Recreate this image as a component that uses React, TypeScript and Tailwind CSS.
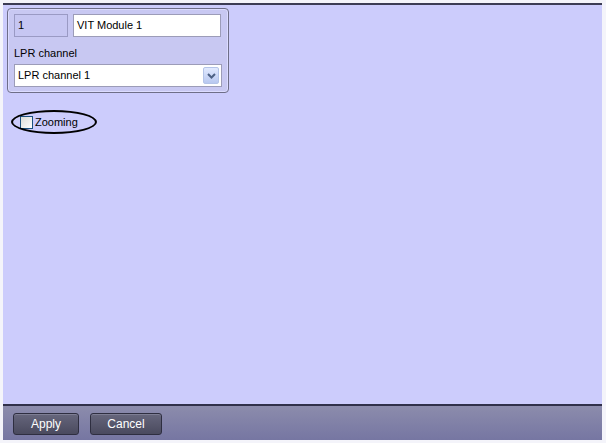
import React from "react";

const font = { fontFamily: '"Liberation Sans", Arial, sans-serif' };

function PanelBox() {
  return (
    <div className="ml-[4px] mt-[3px] w-[222px] h-[85px] rounded-[4px] border border-[#6e6e88] bg-[#c8c8f2] shadow-[inset_0_0_0_1px_#dcdcff] px-[6px] pt-[5px]">
      <div className="flex gap-[5px]">
        <div className="w-[54px] h-[23px] border border-[#9a9ac4] bg-[#c6c6f2] text-[11px] text-black leading-[21px] pl-[3px]">
          1
        </div>
        <div className="w-[148px] h-[23px] border border-[#9c9cb8] bg-white text-[11px] text-black leading-[21px] pl-[3px]">
          VIT Module 1
        </div>
      </div>
      <div className="text-[11px] text-black mt-[10px] leading-[13px]">LPR channel</div>
      <div className="mt-[4px] w-[208px] h-[23px] border border-[#9c9cb8] bg-white flex items-center justify-between pl-[3px] pr-[2px]">
        <span className="text-[11px] text-black">LPR channel 1</span>
        <div className="w-[16px] h-[17px] rounded-[2px] border border-[#b4c4e8] bg-gradient-to-b from-[#e2eaff] to-[#b8c8f0] flex items-center justify-center">
          <svg width="9" height="6" viewBox="0 0 9 6">
            <path d="M1 1 L4.5 4.5 L8 1" stroke="#4d6185" strokeWidth="2" fill="none" />
          </svg>
        </div>
      </div>
    </div>
  );
}

function Btn({ label, w }: { label: string; w: string }) {
  return (
    <button
      className={`${w} h-[22px] rounded-[3px] border border-[#2e2e40] bg-gradient-to-b from-[#66667c] to-[#4a4a5e] text-white text-[12px] leading-[20px] shadow-[inset_0_1px_0_#7e7e94]`}
    >
      {label}
    </button>
  );
}

export default function App() {
  return (
    <div className="w-[606px] h-[443px] bg-[#f4f4fa] overflow-hidden" style={font}>
      <div className="ml-[3px] mt-[3px] w-[599px] h-[437px] flex flex-col">
        <div className="h-[2px] bg-[#3c3c54]" />
        <div className="flex-1 bg-[#ccccfc]">
          <PanelBox />
          <div className="relative ml-[17px] mt-[22px] flex items-center gap-[2px] h-[14px]">
            <div className="absolute left-[-9px] top-[-5px] w-[86px] h-[24px] rounded-[50%] border-2 border-black" />
            <div className="w-[13px] h-[13px] border border-[#1c5180] bg-gradient-to-br from-[#dcdcd8] to-white" />
            <span className="text-[11px] text-black">Zooming</span>
          </div>
        </div>
        <div className="h-[2px] bg-[#30304a]" />
        <div className="h-[34px] bg-gradient-to-b from-[#8c8cac] to-[#7676a2] flex items-center gap-[11px] pl-[10px] pt-[2px]">
          <Btn label="Apply" w="w-[66px]" />
          <Btn label="Cancel" w="w-[72px]" />
        </div>
      </div>
    </div>
  );
}
